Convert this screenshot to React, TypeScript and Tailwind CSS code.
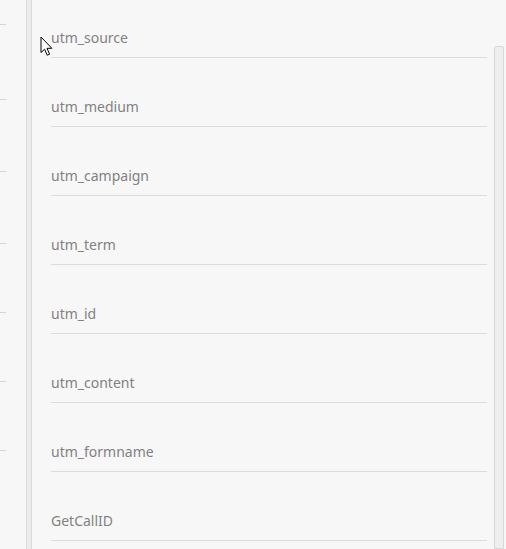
import React from 'react'

const fields = [
  'utm_source',
  'utm_medium',
  'utm_campaign',
  'utm_term',
  'utm_id',
  'utm_content',
  'utm_formname',
  'GetCallID',
]

// offsets of the little marks in the left column
const ticks = ['mt-[24px]', 'mt-[74px]', 'mt-[71px]', 'mt-[71px]', 'mt-[68px]', 'mt-[68px]', 'mt-[68px]']

function Cursor() {
  return (
    <svg className="absolute left-[40px] top-[36px]" width="13" height="21" viewBox="0 0 13 21">
      <path
        d="M1 1 L1 16.5 L4.6 13.2 L7.2 19.2 L9.6 18.2 L7 12.3 L11.8 12.3 Z"
        fill="#fff"
        stroke="#000"
        strokeWidth="1"
        strokeLinejoin="miter"
      />
    </svg>
  )
}

export default function App() {
  return (
    <div className="relative flex h-[549px] w-[506px] overflow-hidden bg-[#f7f7f7] font-['Noto_Sans',sans-serif]">
      <div className="flex w-[26px] flex-col">
        {ticks.map((t, i) => (
          <div key={i} className={`${t} h-px w-[6px] bg-[#d5d5d5]`} />
        ))}
      </div>
      <div className="w-[6px] border-x border-[#dadada] bg-[#ebebeb]" />
      <div className="flex flex-1 flex-col pl-[19px] pr-[7px]">
        {fields.map((f) => (
          <div key={f} className="border-b border-[#dcdcdc] pt-[39px] pb-[9px] first:pt-[28px]">
            <div className="h-[20px] text-[14px] leading-[20px] text-[#828282]">{f}</div>
          </div>
        ))}
      </div>
      <div className="w-[12px] pt-[46px] pr-[2px]">
        <div className="h-full w-[10px] rounded-t-[2px] border border-[#d8d8d8] bg-[#eeeeee]" />
      </div>
      <Cursor />
    </div>
  )
}
